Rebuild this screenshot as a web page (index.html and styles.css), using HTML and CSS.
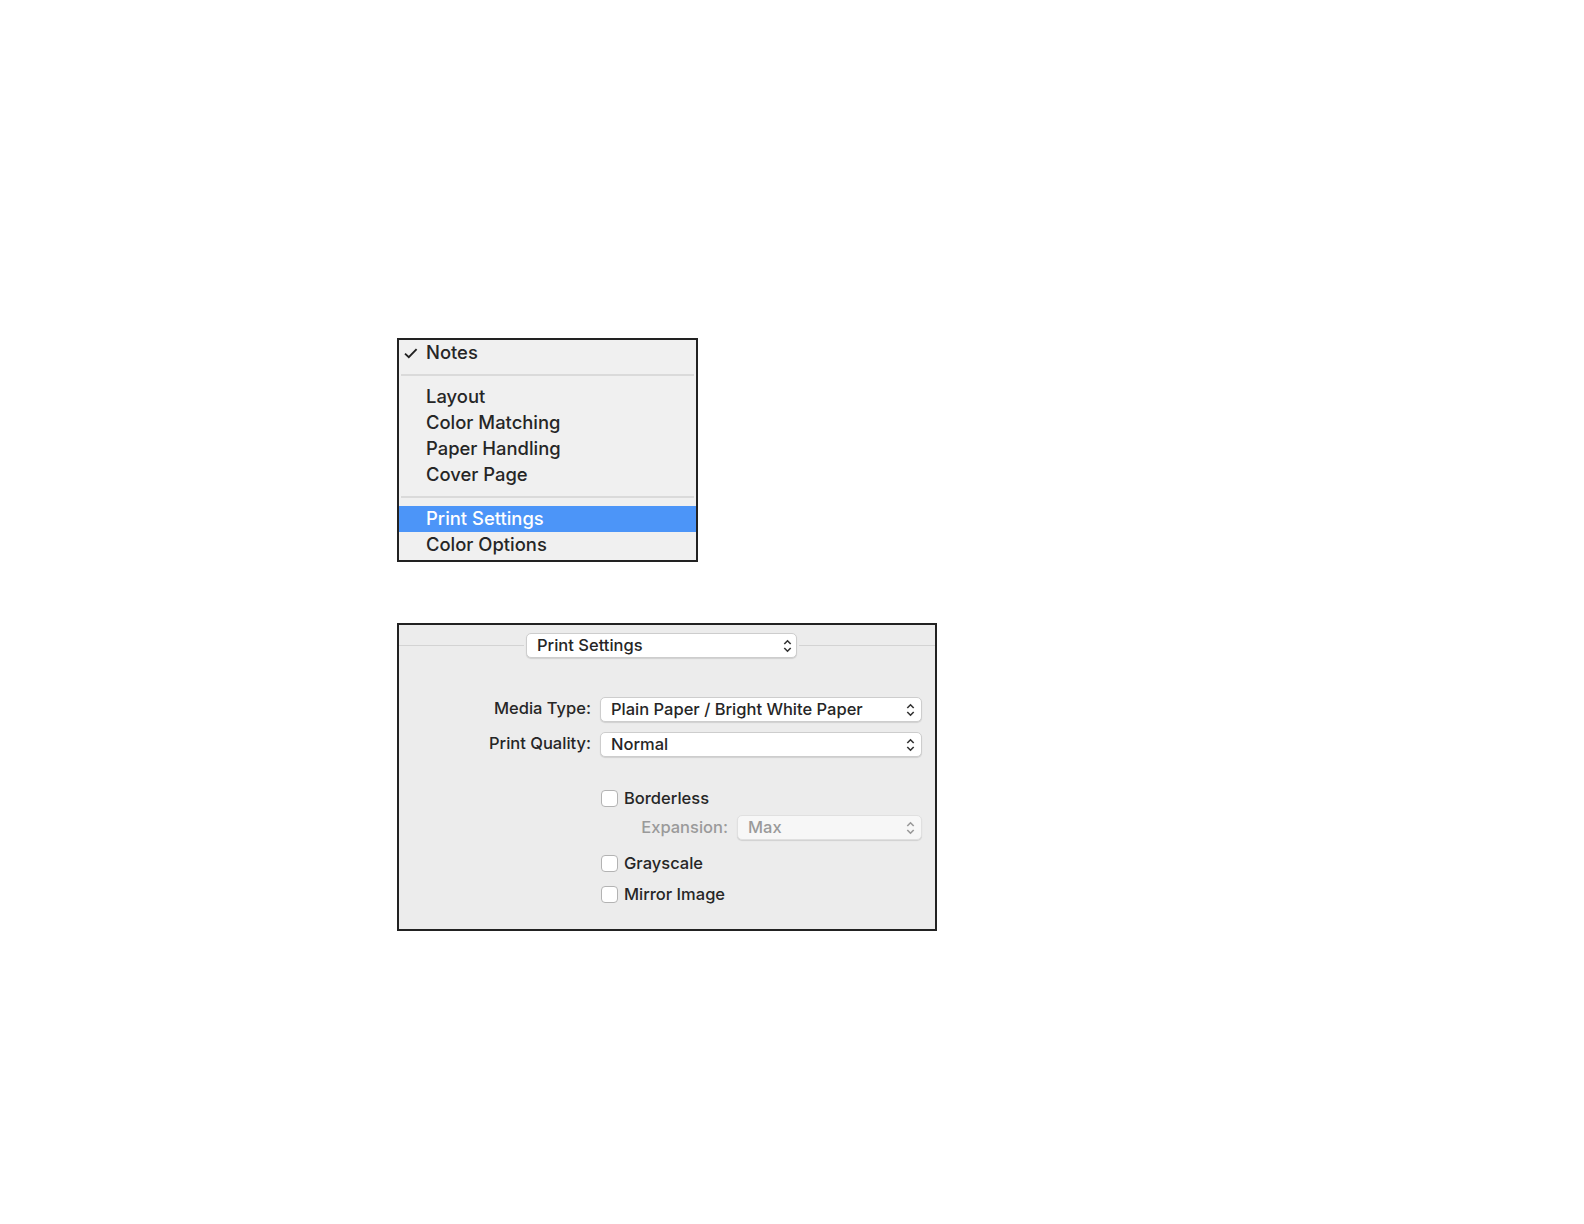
FILE: index.html
```html
<!DOCTYPE html>
<html lang="en">
<head>
    <meta charset="UTF-8">
    <title>Print Settings</title>
    <link rel="stylesheet" href="styles.css">
</head>
<body>

    <div class="page">
        <div class="menu">
            <div class="item checked">
                <svg class="check" width="14" height="11" viewBox="0 0 14 11"><path d="M1 5.6 L4.8 9.2 L12.6 1.2" fill="none" stroke="#222" stroke-width="1.9"/></svg>
                Notes
            </div>
            <div class="sep"></div>
            <div class="item">Layout</div>
            <div class="item">Color Matching</div>
            <div class="item">Paper Handling</div>
            <div class="item">Cover Page</div>
            <div class="sep"></div>
            <div class="item active">Print Settings</div>
            <div class="item">Color Options</div>
        </div>

        <div class="panel">
            <div class="header">
                <div class="line left"></div>
                <div class="popup head-popup">
                    <span>Print Settings</span>
                    <svg class="arrows" width="9" height="14" viewBox="0 0 9 14"><path d="M1.3 5 L4.5 1.8 L7.7 5 M1.3 9 L4.5 12.2 L7.7 9" fill="none" stroke="#333" stroke-width="1.6"/></svg>
                </div>
                <div class="line"></div>
            </div>

            <div class="form">
                <div class="row media">
                    <label class="label">Media Type:</label>
                    <div class="popup">
                        <span>Plain Paper / Bright White Paper</span>
                        <svg class="arrows" width="9" height="14" viewBox="0 0 9 14"><path d="M1.3 5 L4.5 1.8 L7.7 5 M1.3 9 L4.5 12.2 L7.7 9" fill="none" stroke="#333" stroke-width="1.6"/></svg>
                    </div>
                </div>
                <div class="row quality">
                    <label class="label">Print Quality:</label>
                    <div class="popup">
                        <span>Normal</span>
                        <svg class="arrows" width="9" height="14" viewBox="0 0 9 14"><path d="M1.3 5 L4.5 1.8 L7.7 5 M1.3 9 L4.5 12.2 L7.7 9" fill="none" stroke="#333" stroke-width="1.6"/></svg>
                    </div>
                </div>

                <div class="options">
                    <div class="check-row borderless"><span class="box"></span>Borderless</div>
                    <div class="expansion">
                        <label class="label dim">Expansion:</label>
                        <div class="popup disabled">
                            <span>Max</span>
                            <svg class="arrows" width="9" height="14" viewBox="0 0 9 14"><path d="M1.3 5 L4.5 1.8 L7.7 5 M1.3 9 L4.5 12.2 L7.7 9" fill="none" stroke="#999" stroke-width="1.6"/></svg>
                        </div>
                    </div>
                    <div class="check-row grayscale"><span class="box"></span>Grayscale</div>
                    <div class="check-row mirror"><span class="box"></span>Mirror Image</div>
                </div>
            </div>
        </div>
    </div>

</body>
</html>
```

FILE: styles.css
```css
body {
    margin: 0;
    background: #fff;
    font-family: Inter, "Liberation Sans", sans-serif;
    font-weight: 500;
    color: #262626;
}
.page {
    padding: 338px 0 0 397px;
}

/* popup menu */
.menu {
    width: 297px;
    border: 2px solid #222;
    background: #f0f0f0;
    padding: 0 0 2px 0;
}
.item {
    height: 25px;
    line-height: 25px;
    padding: 0 0 1px 27px;
    font-size: 18.4px;
    position: relative;
}
.item.active {
    background: #4c95f8;
    color: #fff;
}
.check {
    position: absolute;
    left: 5px;
    top: 8px;
}
.sep {
    height: 2px;
    background: #dadada;
    margin: 8px 2px;
}

/* print settings panel */
.panel {
    width: 536px;
    height: 304px;
    margin-top: 61px;
    border: 2px solid #222;
    background: #ececec;
    font-size: 16.5px;
}
.header {
    display: flex;
    align-items: center;
    padding-top: 8px;
}
.line {
    flex: 1;
    height: 1px;
    background: #d3d3d3;
}
.line.left {
    flex: none;
    width: 125px;
}
.popup {
    display: flex;
    align-items: center;
    justify-content: space-between;
    box-sizing: border-box;
    height: 25px;
    padding: 0 6px 2px 10px;
    background: #fff;
    border: 1px solid #cdcdcd;
    border-radius: 5px;
    box-shadow: 0 1px 1px rgba(0, 0, 0, 0.12);
}
.arrows {
    margin-top: 2px;
}
.head-popup {
    width: 271px;
    margin: 0 2px;
    padding-right: 4px;
}
.form {
    padding-top: 39px;
}
.row {
    display: flex;
    align-items: center;
}
.row .label {
    padding-bottom: 3px;
}
.row .popup {
    width: 322px;
}
.quality {
    margin-top: 10px;
}
.label {
    width: 192px;
    text-align: right;
    margin-right: 9px;
}
.options {
    margin-left: 202px;
    padding-top: 31px;
}
.check-row {
    display: flex;
    align-items: center;
    height: 20px;
}
.box {
    width: 15px;
    height: 15px;
    border: 1px solid #b3b3b3;
    border-radius: 4px;
    background: #fff;
    margin-right: 6px;
}
.expansion {
    display: flex;
    align-items: center;
    justify-content: flex-end;
    width: 321px;
    margin-top: 7px;
}
.expansion .label {
    width: auto;
    margin: 0 9px 0 0;
    padding-bottom: 2px;
}
.dim {
    color: #9a9a9a;
}
.popup.disabled {
    width: 185px;
    color: #9a9a9a;
    border-color: #e0e0e0;
    background: #f7f7f7;
}
.grayscale {
    margin-top: 13px;
}
.mirror {
    margin-top: 11px;
}
```
